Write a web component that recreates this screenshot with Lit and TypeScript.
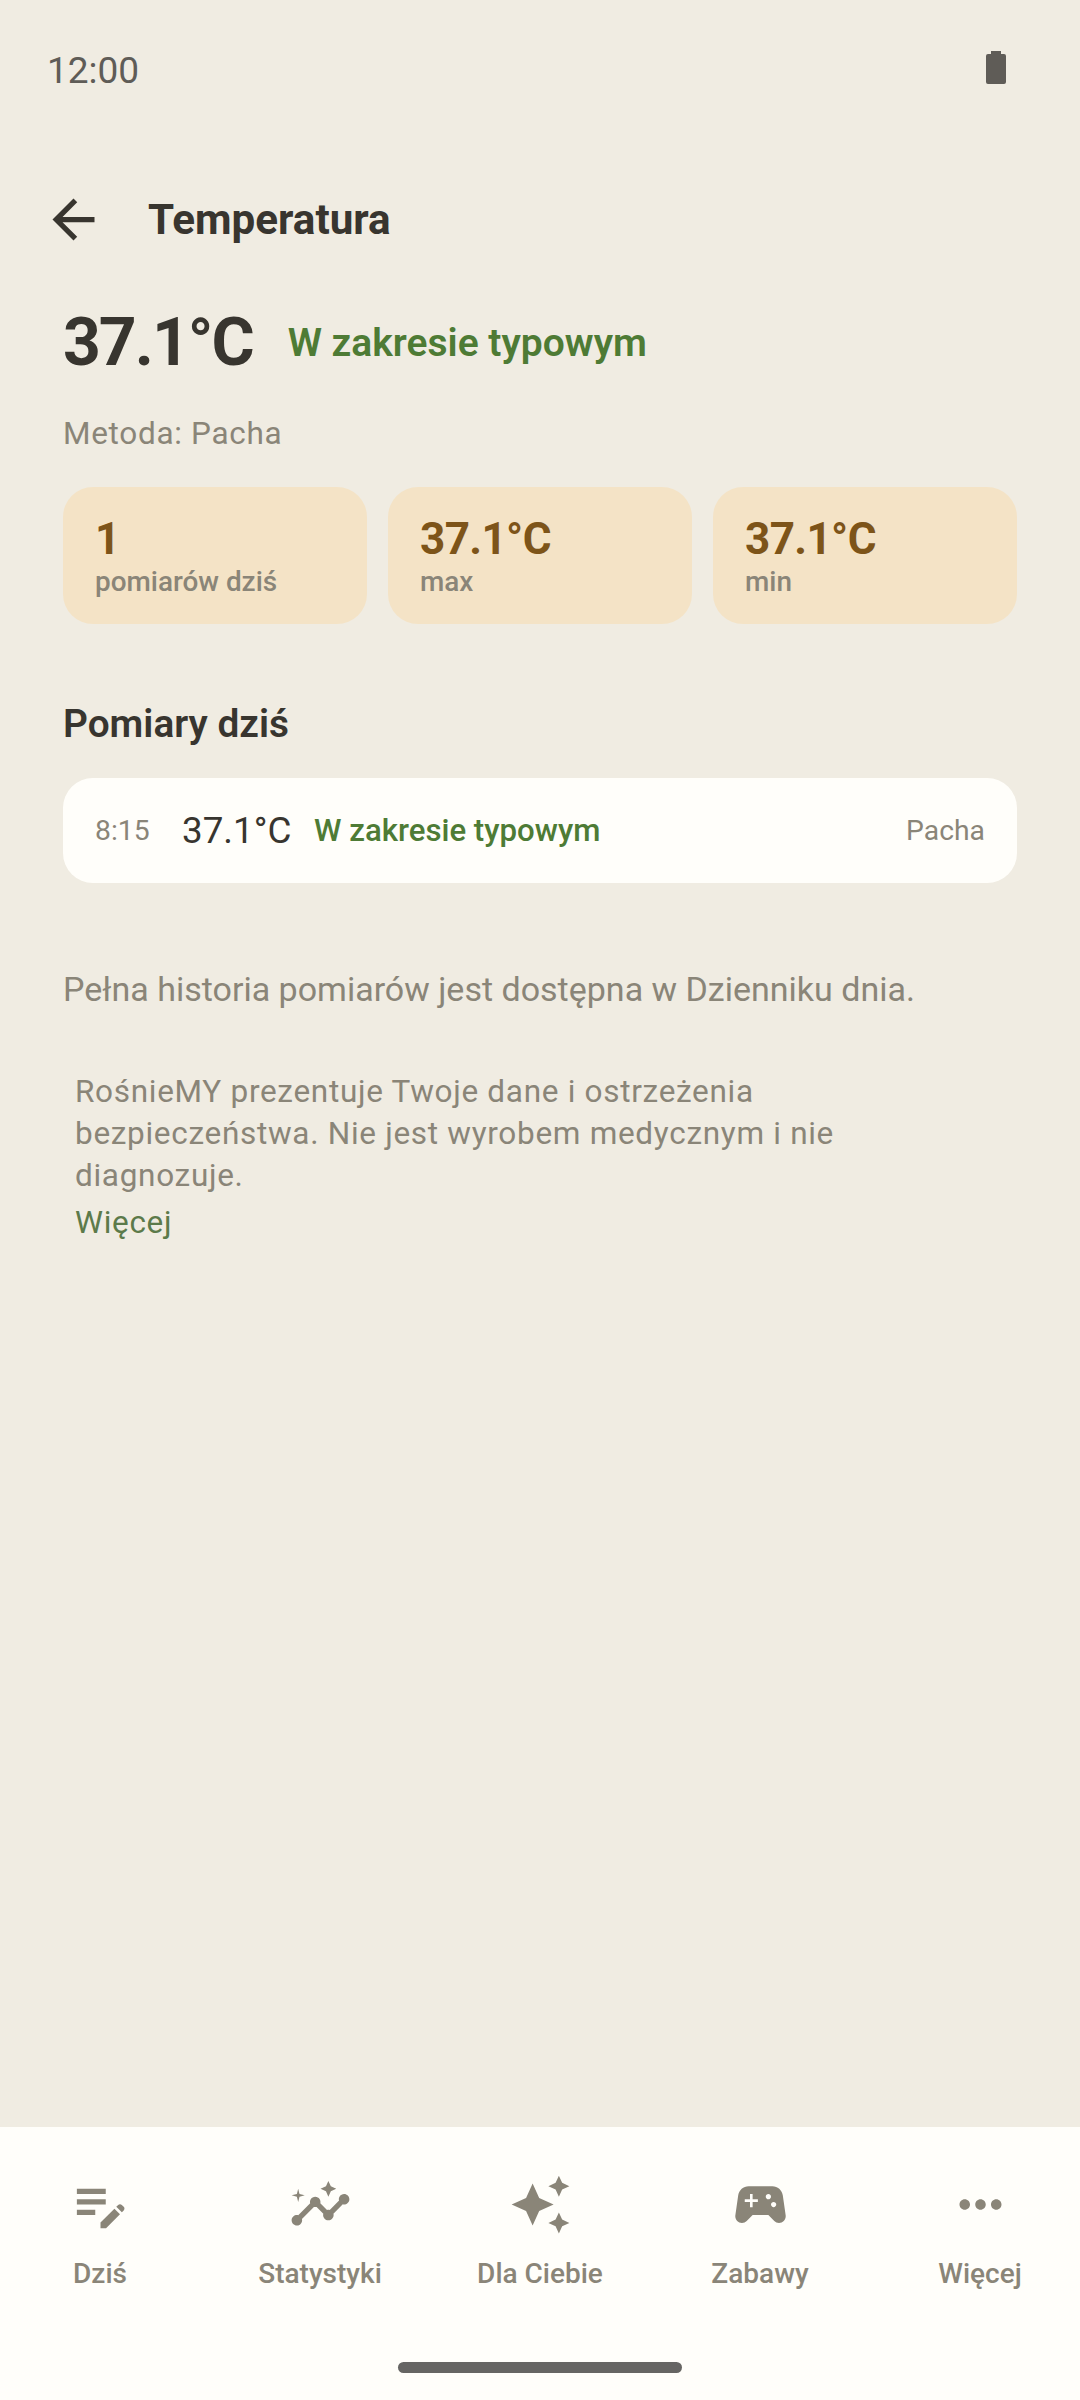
import { LitElement, html, css, svg } from 'lit';
import { customElement } from 'lit/decorators.js';

const NAV_ITEMS = [
  {
    label: 'Dziś',
    icon: svg`<path d="M3 10h11v2H3v-2zm0-2h11V6H3v2zm0 8h7v-2H3v2zm15.01-3.13.71-.71c.39-.39 1.02-.39 1.41 0l.71.71c.39.39.39 1.02 0 1.41l-.71.71-2.12-2.12zm-.71.71L12 18.88V21h2.12l5.3-5.3-2.12-2.12z"/>`,
  },
  {
    label: 'Statystyki',
    icon: svg`<path d="M21 8c-1.45 0-2.26 1.44-1.93 2.51l-3.55 3.56c-.3-.09-.74-.09-1.04 0l-2.55-2.55C12.27 10.45 11.46 9 10 9c-1.45 0-2.27 1.44-1.93 2.52l-4.56 4.55C2.44 15.74 1 16.55 1 18c0 1.1.9 2 2 2 1.45 0 2.26-1.44 1.93-2.51l4.55-4.56c.3.09.74.09 1.04 0l2.55 2.55C12.73 16.55 13.54 18 15 18c1.45 0 2.27-1.44 1.93-2.52l3.56-3.55C21.56 12.26 23 11.45 23 10c0-1.1-.9-2-2-2z"/><path d="m15 9 .94-2.07L18 6l-2.06-.93L15 3l-.92 2.07L12 6l2.08.93L15 9zM3.5 11 4 9l2-.5L4 8l-.5-2L3 8l-2 .5L3 9l.5 2z"/>`,
  },
  {
    label: 'Dla Ciebie',
    icon: svg`<path d="m19 9 1.25-2.75L23 5l-2.75-1.25L19 1l-1.25 2.75L15 5l2.75 1.25L19 9zm-7.5.5L9 4 6.5 9.5 1 12l5.5 2.5L9 20l2.5-5.5L17 12l-5.5-2.5zM19 15l-1.25 2.75L15 19l2.75 1.25L19 23l1.25-2.75L23 19l-2.75-1.25L19 15z"/>`,
  },
  {
    label: 'Zabawy',
    icon: svg`<path d="m21.58 16.09-1.09-7.66C20.21 6.46 18.52 5 16.53 5H7.47C5.48 5 3.79 6.46 3.51 8.43l-1.09 7.66C2.2 17.63 3.39 19 4.94 19c.68 0 1.32-.27 1.8-.75L9 16h6l2.25 2.25c.48.48 1.13.75 1.8.75 1.56 0 2.75-1.37 2.53-2.91zM11 11H9v2H8v-2H6v-1h2V8h1v2h2v1zm4-1c-.55 0-1-.45-1-1s.45-1 1-1 1 .45 1 1-.45 1-1 1zm2 3c-.55 0-1-.45-1-1s.45-1 1-1 1 .45 1 1-.45 1-1 1z"/>`,
  },
  {
    label: 'Więcej',
    icon: svg`<path d="M6 10c-1.1 0-2 .9-2 2s.9 2 2 2 2-.9 2-2-.9-2-2-2zm12 0c-1.1 0-2 .9-2 2s.9 2 2 2 2-.9 2-2-.9-2-2-2zm-6 0c-1.1 0-2 .9-2 2s.9 2 2 2 2-.9 2-2-.9-2-2-2z"/>`,
  },
];

const STATS = [
  { value: '1', label: 'pomiarów dziś' },
  { value: '37.1°C', label: 'max' },
  { value: '37.1°C', label: 'min' },
];

@customElement('app-root')
export class AppRoot extends LitElement {
  static styles = css`
    :host {
      display: block;
      font-family: Roboto, sans-serif;
      color: #38352f;
    }

    .page {
      display: flex;
      flex-direction: column;
      height: 2400px;
      background: #f0ece2;
    }

    .status {
      display: flex;
      align-items: center;
      justify-content: space-between;
      height: 138px;
      padding: 0 74px 0 47px;
      box-sizing: border-box;
      font-size: 37px;
      color: #5f5c57;
    }

    .status span {
      margin-top: 3px;
    }

    .status svg {
      width: 20px;
      height: 33px;
      margin-bottom: 3px;
      fill: #5f5c57;
    }

    .toolbar {
      display: flex;
      align-items: center;
      gap: 43px;
      height: 162px;
      padding-left: 42px;
    }

    .toolbar svg {
      width: 63px;
      height: 63px;
      fill: #38352f;
    }

    .toolbar h1 {
      margin: 0;
      font-size: 42.2px;
      font-weight: 700;
    }

    .content {
      flex: 1;
      padding: 0 63px;
    }

    .headline {
      display: flex;
      align-items: center;
      gap: 35px;
      margin-top: 4px;
    }

    .big {
      font-size: 66px;
      font-weight: 700;
      letter-spacing: -2px;
    }

    .range {
      color: #4e7b35;
      font-weight: 500;
    }

    .headline .range {
      font-size: 39px;
      font-weight: 600;
    }

    .method {
      margin-top: 34px;
      font-size: 31.5px;
      letter-spacing: 0.7px;
      color: #8a8578;
    }

    .stats {
      display: grid;
      grid-template-columns: repeat(3, 1fr);
      gap: 21px;
      margin-top: 35px;
    }

    .stat {
      display: flex;
      flex-direction: column;
      justify-content: center;
      height: 137px;
      padding: 3px 32px 0;
      box-sizing: border-box;
      border-radius: 30px;
      background: #f4e3c6;
    }

    .stat b {
      font-size: 44px;
      font-weight: 700;
      line-height: 50px;
      letter-spacing: -0.6px;
      color: #7d5419;
    }

    .stat span {
      font-size: 27.9px;
      font-weight: 500;
      line-height: 36px;
      color: #8a8578;
    }

    h2 {
      margin: 77px 0 0;
      font-size: 38.8px;
      font-weight: 600;
    }

    .row {
      display: flex;
      align-items: center;
      height: 105px;
      margin-top: 32px;
      padding: 0 32px;
      border-radius: 30px;
      background: #fffefa;
    }

    .row .time {
      width: 87px;
      font-size: 28.3px;
      color: #8a8578;
    }

    .row .temp {
      width: 132px;
      font-size: 36.75px;
    }

    .row .range {
      flex: 1;
      font-size: 31.2px;
    }

    .row .where {
      font-size: 28.3px;
      color: #8a8578;
    }

    .note {
      margin: 86px 0 0;
      font-size: 34px;
      color: #8a8578;
    }

    .disclaimer {
      margin: 62px 0 0;
      padding-left: 12px;
      font-size: 31.5px;
      line-height: 42px;
      letter-spacing: 0.7px;
      color: #8a8578;
    }

    .more {
      display: block;
      margin-top: 5px;
      color: #5c7a4a;
    }

    .nav {
      display: flex;
      flex-direction: column;
      height: 273px;
      background: #fffefa;
    }

    .nav-items {
      display: flex;
      justify-content: space-between;
      padding-top: 46px;
    }

    .nav-item {
      display: flex;
      flex-direction: column;
      align-items: center;
      gap: 21px;
      width: 200px;
      font-size: 28px;
      font-weight: 500;
      color: #8a8578;
    }

    .nav-item svg {
      width: 63px;
      height: 63px;
      fill: #8a8578;
    }

    .handle {
      width: 284px;
      height: 11px;
      margin: auto auto 27px;
      border-radius: 6px;
      background: #666563;
    }
  `;

  render() {
    return html`
      <div class="page">
        <div class="status">
          <span>12:00</span>
          <svg viewBox="0 0 20 33">
            <path d="M5 0h10v3h3a2 2 0 0 1 2 2v26a2 2 0 0 1-2 2H2a2 2 0 0 1-2-2V5a2 2 0 0 1 2-2h3z" />
          </svg>
        </div>
        <div class="toolbar">
          <svg viewBox="0 0 24 24"><path d="M20 11H7.83l5.59-5.59L12 4l-8 8 8 8 1.41-1.41L7.83 13H20v-2z" /></svg>
          <h1>Temperatura</h1>
        </div>
        <div class="content">
          <div class="headline">
            <span class="big">37.1°C</span>
            <span class="range">W zakresie typowym</span>
          </div>
          <div class="method">Metoda: Pacha</div>
          <div class="stats">
            ${STATS.map((s) => html`<div class="stat"><b>${s.value}</b><span>${s.label}</span></div>`)}
          </div>
          <h2>Pomiary dziś</h2>
          <div class="row">
            <span class="time">8:15</span>
            <span class="temp">37.1°C</span>
            <span class="range">W zakresie typowym</span>
            <span class="where">Pacha</span>
          </div>
          <p class="note">Pełna historia pomiarów jest dostępna w Dzienniku dnia.</p>
          <p class="disclaimer">
            RośnieMY prezentuje Twoje dane i ostrzeżenia<br />
            bezpieczeństwa. Nie jest wyrobem medycznym i nie<br />
            diagnozuje.
            <span class="more">Więcej</span>
          </p>
        </div>
        <div class="nav">
          <div class="nav-items">
            ${NAV_ITEMS.map(
              (item) => html`
                <div class="nav-item">
                  <svg viewBox="0 0 24 24">${item.icon}</svg>
                  <span>${item.label}</span>
                </div>
              `
            )}
          </div>
          <div class="handle"></div>
        </div>
      </div>
    `;
  }
}
